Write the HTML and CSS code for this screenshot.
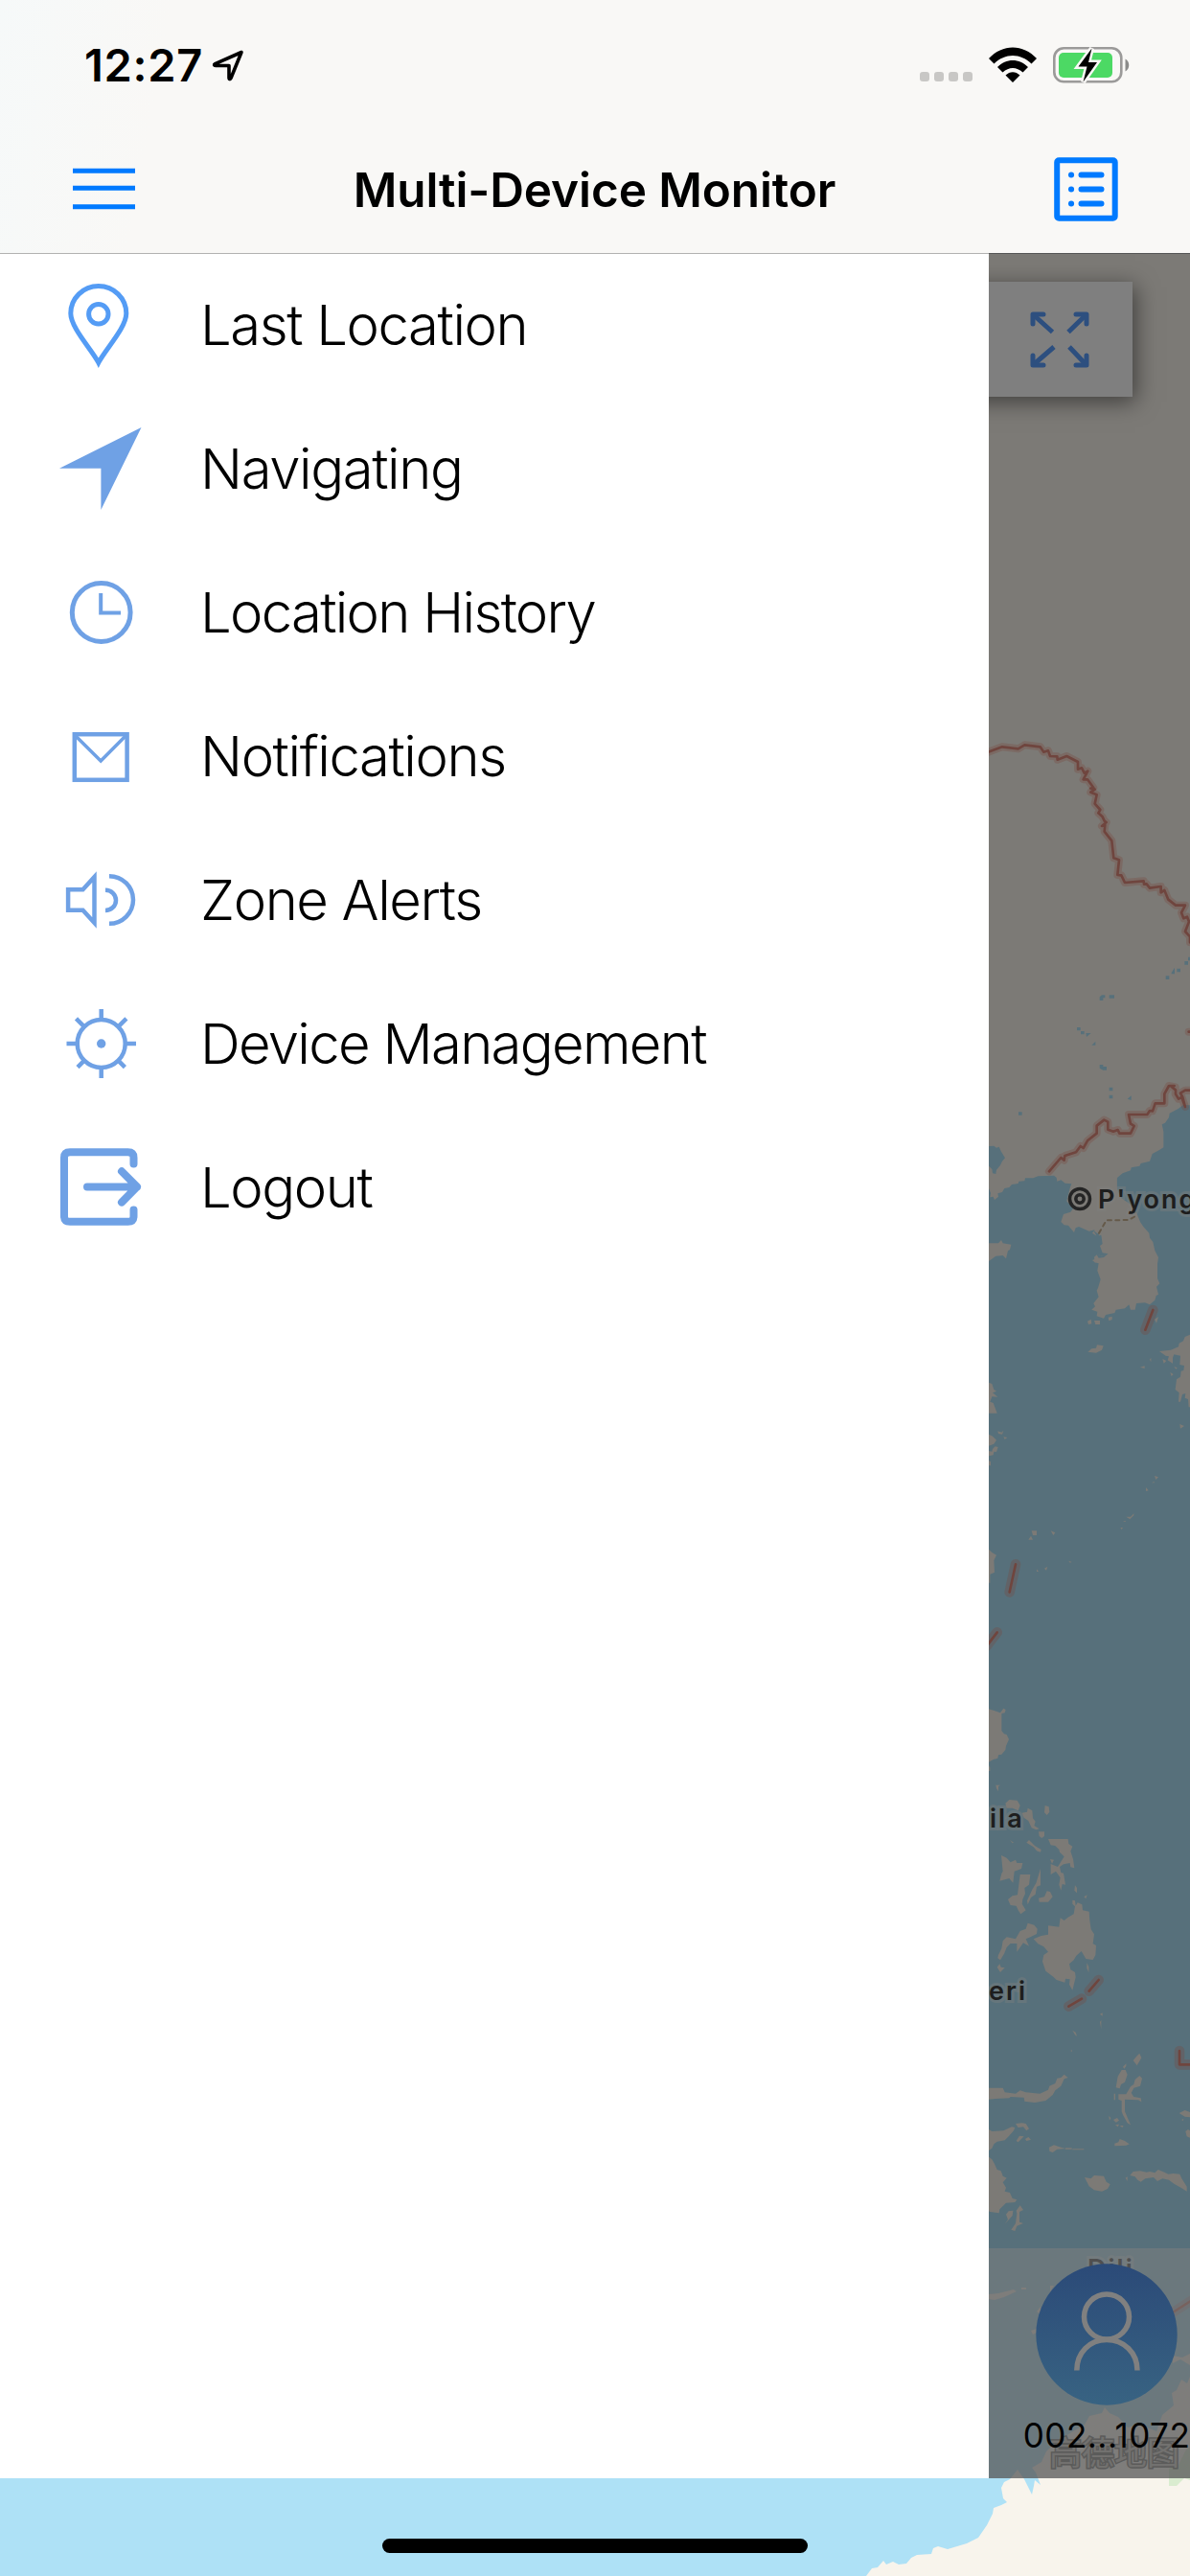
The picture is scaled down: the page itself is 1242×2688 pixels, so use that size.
FILE: index.html
```html
<!DOCTYPE html>
<html lang="en">
<head>
  <meta charset="utf-8">
  <title>Multi-Device Monitor</title>
  <link rel="stylesheet" href="styles.css">
</head>
<body>
  <div class="screen">
    <div class="map">
      <svg class="map-canvas" width="1242" height="2688" viewBox="0 0 1242 2688">
        <rect class="land" width="1242" height="2688"/>
        <rect class="water" y="2346" width="1242" height="342"/>

        <!-- north east: borders, rivers, coast -->
        <g transform="translate(1020 760) scale(.33333)">
          <path class="water" d="M36 1308L52 1307 60 1313 68 1310 75 1325 87 1345 78 1355 72 1368 60 1382 58 1395 48 1393 46 1380 36 1370Z"/>
          <path class="water" d="M36 1440L42 1455 40 1468 50 1466 54 1476 66 1466 64 1456 78 1452 85 1440 100 1437 108 1428 128 1425 130 1418 148 1417 150 1408 175 1408 190 1402 240 1400 248 1406 250 1418 262 1414 275 1424 297 1426 300 1450 437 1480V1408L455 1393 480 1384 482 1375 508 1370 512 1362 540 1355 548 1332 570 1320 583 1312V1262L578 1240 588 1235 600 1218 602 1205 630 1190 645 1178 666 1180V4800H36Z"/>
          <g class="water">
            <path d="M590 775h11v11h-11zM608 765l10-16v20h-10zM625 752h11v11h-11zM649 729h11v11h-11zM660 716h6v11h-6zM383 841l7-6h10v9h-6v8h-11zM413 835h16v10h-16zM312 936h11v10h-11zM324 948h11v10h-11zM340 954h16l-14 12zM358 992l12-12v12zM383 1053h11v6h11v11h-11l-11-6zM413 1124h11v11h-11zM413 1148h11v11h-11zM470 1160l12-10v14zM129 1201h11v10h-11z"/>
          </g>
          <path class="border-glow" d="M30 76L78 58 128 64 148 52 197 58 208 74 222 70 228 87 250 88 251 98 280 87 315 105V128L327 124 335 140 346 134 332 160 345 160 364 186 355 200 374 208 368 236 385 255 379 265 392 277 398 290 404 294 390 306 400 302 398 323 421 352 427 406 444 412 439 459 451 460 462 483 521 478 522 488 530 487 540 500 575 495V514L586 507 598 536 621 554H651L639 577 646 595 657 590 663 605 651 636 666 652V670"/>
          <path class="border-line" d="M30 76L78 58 128 64 148 52 197 58 208 74 222 70 228 87 250 88 251 98 280 87 315 105V128L327 124 335 140 346 134 332 160 345 160 364 186 355 188 368 191 355 200 374 208 368 236 385 255 379 265 392 277 398 290 404 294 390 306 400 302 398 323 421 352 427 406 444 412 439 459 451 460 462 483 521 478 522 488 530 487 540 500 575 495V514L586 507 598 536 621 554H651L639 577 646 595 657 590 663 605 651 636 666 652V670"/>
          <path class="border-glow" d="M225 1387L262 1344 272 1352 274 1338 309 1327 323 1308 332 1314 345 1291 374 1268V1244L397 1226 409 1232V1256L426 1262 440 1257 445 1268H480L491 1245 480 1238 474 1209H532L540 1197 549 1198 557 1174H586V1144L600 1119 620 1123V1145L630 1160 640 1155 651 1185 636 1142 651 1133H670"/>
          <path class="border-line" d="M225 1387L262 1344 272 1352 274 1338 309 1327 323 1308 332 1314 345 1291 374 1268V1244L397 1226 409 1232V1256L426 1262 440 1257 445 1268H480L491 1245 480 1238 474 1209H532L540 1197 549 1198 557 1174H586V1144L600 1119H617L608 1122 621 1132V1145L630 1160 640 1155 651 1185 643 1155 636 1142 651 1133H670"/>
          <path class="border-glow" d="M662 950h8"/>
          <path class="border-line" d="M662 950h8"/>
        </g>

        <!-- korea, japan, ryukyu -->
        <g transform="translate(1020 1220) scale(.33333)">
          <path class="land" d="M297 40L290 60 280 100 300 124 292 134 270 141 262 165 272 175 285 176 296 190 303 198 308 184 318 180 350 194 368 190 360 200 375 210 388 206 392 234 384 240 392 262 410 265 390 272 376 266 366 275 368 292 380 295 376 318 386 345 378 372 374 380 380 400 364 420 369 430 358 440 376 446 374 460 396 467 402 456 430 450 434 440 462 436 475 424 480 440 494 440 498 420 525 418 540 424 556 410 560 396 567 392 561 368 571 358 564 342V296L567 276 556 255 550 228 540 215 538 200 520 180 510 165 500 140 480 110 450 90 437 60V25Z"/>
          <path class="land" d="M346 572L358 562 372 560 375 550 395 553 390 566 372 575ZM345 476L356 470 358 484 348 486ZM366 474h18v12h-14zM410 464l12-3v10l-10 4zM360 285l10-4v12zM555 470l12-8-6 20z"/>
          <path class="land" d="M36 232H66L75 222 80 232 106 236 102 252 96 255 90 280 80 270 58 272 36 288ZM36 668L46 672 52 690 60 695 48 700 64 713 46 712 40 728 50 732 62 764H36ZM36 830L48 836 60 848 52 860 36 866ZM36 882L46 884 48 876 56 868 65 870 60 885 52 884 50 895 36 898ZM36 912l6 4v12h-6zM64 820l12 4 6-6-4 12-12-2zM82 838l12 2-8 6zM36 1190L46 1200 60 1208 52 1225 54 1262 40 1268V1295H36Z"/>
          <path class="land" d="M666 518L650 525 645 538 632 545 630 556 606 566 570 570 590 584 600 586 596 598 612 608V590L616 580 636 584 634 612 648 615 646 630 638 632 636 650 624 658 620 690 632 700 630 728 636 728 642 705 652 702 650 716 660 720 662 745H666ZM604 636l10 6-6 6zM580 594l12 6-8 8zM616 618l10 4-4 4z"/>
          <path class="land" d="M510 620l14-4v8zM540 596l4-6v14zM634 798l14 6-12 8zM555 960l12 4-8 8zM528 996l8 10-8 2zM546 982l8-4v4zM466 1088l14 0 10-10v6l-12 12zM456 1104l8-4v4zM448 1122l8 0-4 6zM170 1132h16v14h-12zM160 1160l8-12 6 12zM230 1132l14 6-6 8zM286 1226l10 4-6 2zM186 1252l6 8h-6zM210 1250l10-6-4 12z"/>
          <path class="water" d="M362 190l14 12 10-10-6 14 8 10-10-2-4 6-2-14zM372 264l18 8 20-8-14 12-16 2z"/>
          <path class="dmz" d="M381 200L404 160 474 159 493 148V132"/>
          <g class="border-glow">
            <path d="M526 503L550 441M101 1324L120 1237M30 1492L62 1450"/>
          </g>
          <g class="border-line">
            <path d="M526 503L550 441M101 1324L120 1237M30 1492L62 1450"/>
          </g>
        </g>

        <!-- philippines -->
        <g transform="translate(1020 1700) scale(.33333)">
          <path class="land" d="M36 250L55 256 72 262 82 248 89 252 86 262 76 264V318L84 328 92 330 99 345 90 365 88 378 76 392 66 394 64 404 50 408 36 416ZM36 426l4 8v10h-4z"/>
          <path class="land" d="M58 488h14l-6 4v16l-6-10zM88 545L100 534 125 536 134 552 128 568 110 560 92 560ZM140 575L156 572 158 560 172 568 174 592 182 602 178 615 194 625 184 628 170 622 160 600 146 590ZM192 634h18v14l-8 6-8-6zM212 552L224 556 226 572 218 582 210 574ZM154 668L162 660 180 678 200 690 198 698 186 694 176 682ZM102 660l12 8-4 2zM222 657H284L286 672 298 680 292 695 300 720 304 748 292 745 290 732 270 736 258 744 262 762 270 764 276 800 266 798 262 818 256 800 260 778 246 758 230 768V735L252 744 272 712 258 698 256 690 244 678 230 676ZM228 720l12 2-6 12z"/>
          <path class="land" d="M75 708L92 716 104 730 120 722 124 732 142 732 138 750 116 758 112 794 100 780 70 788 76 765 80 758ZM134 768L166 768 162 800 148 810 150 828 142 846 140 860 152 880 136 892 128 880 122 866 104 864 96 846 110 835 126 832ZM198 750V802L186 806 182 830 168 840 158 862 156 850 172 815 184 795ZM192 842L210 838 218 820 228 822 236 838 222 854 194 854ZM306 802l6 8v16l-8-8zM334 838l10-6-4 12z"/>
          <path class="land" d="M298 848L306 850 308 866 314 856 328 862 330 880 350 884 352 912 356 940 366 955 362 985 372 990 370 1020 362 1035 340 1032 326 1008 310 1022 302 1036 288 1048 292 1066 306 1074 308 1090 298 1130 288 1112 290 1096 276 1094 274 1106 248 1098 238 1088 214 1070 204 1040 208 1020 222 1010 208 994 190 985 176 970 200 960 222 956 222 928 256 932 260 904 272 912 284 902 302 892 306 868 298 860Z"/>
          <path class="land" d="M134 945L152 938 158 920 178 926 188 938 186 954 166 964 152 970 162 992 144 982 124 1010 124 984 104 984 92 996 84 1016 72 1036 64 1030 66 1020 76 1000 80 976 92 964 120 970ZM62 1058l8-10 4 10 12 2-14 14zM343 1045l6 12v18l-6-14z"/>
          <path class="border-glow wide" d="M286 1181L327 1157M350 1133L380 1098"/>
          <path class="border-line" d="M286 1181L327 1157M350 1133L380 1098"/>
        </g>

        <!-- indonesia -->
        <g transform="translate(1020 2060) scale(.33333)">
          <path class="land" d="M36 356H80L86 370 120 374 134 364 152 370 196 374 222 362 226 350 244 342 250 326 262 324 272 314 284 324 272 328 262 350 244 364 236 378 214 396 180 402 148 398 146 386 104 384 100 388 56 390 36 392ZM36 486L46 492 82 490 108 478 118 480 114 490 98 508 86 520 62 524 52 532 46 545 36 552ZM120 468L140 466 152 468 162 484 154 490 144 478 128 480ZM122 522L132 506 146 508 140 514 128 526ZM150 516l10-6 8 8-14 4z"/>
          <path class="land" d="M36 572L46 580 54 594 62 612 74 616 80 632 92 638 80 652 90 668 86 680 102 684 110 702 124 706 118 714 90 716 70 736 68 748 40 744 36 742ZM86 782L96 768 90 752 98 742 112 740 110 756ZM106 800L120 780 124 750 122 740 134 724 144 738 132 744 132 776 144 780 124 788 118 804Z"/>
          <path class="land" d="M225 542L240 535 262 542 276 546 250 548 236 558 226 554ZM276 544l20 0 0 4h-20zM298 547h36v3h-36zM336 636L356 640 366 630 396 632 404 650 416 658 408 672 390 680 366 676 350 664ZM430 530L442 526 446 516 462 522 476 532 466 536 430 538ZM478 630L488 618 510 616 530 620 540 618 556 622 566 612 586 620 598 626 614 624 634 626 640 640 656 665 656 680 640 670 616 656 600 644 580 640 564 648 552 636 526 640 512 650 502 644 494 634ZM464 638l6-4v14z"/>
          <path class="land" d="M440 320L452 300 464 300 470 314 462 338 450 345 446 358 434 355ZM456 290l10-10v8l-6 8zM488 270L500 256 508 248 514 262 500 286ZM442 376H466L480 352 490 345 494 330 508 318 516 326 510 350 490 356 482 372 490 384 512 388 514 400 504 394 462 392V430L480 472 470 466 456 440 452 430V396L442 392ZM426 456l12-6 6 8-10 6zM432 472l12-2-4 8zM412 444l6 6-4 8zM446 474l12 0-4 6zM428 374h4v20h-4zM632 435L650 426 666 432V448L650 446ZM652 492L660 486 666 490V512L656 508ZM384 125l8-4v10zM384 150l4-6v28zM298 176l10 6 4 12-6-4zM292 240l4-4v8zM640 456l6-4-2 8z"/>
          <path class="border-glow wide" d="M633 240V283H670"/>
          <path class="border-line" d="M633 240V283H670"/>
        </g>

        <!-- timor and the australian coast -->
        <path class="land" d="M1032 2394L1042 2393 1058 2389 1061 2391 1048 2397 1038 2400 1032 2399ZM1066 2387h5v2h-5zM1096 2385l4 0-4 6zM1082 2412l4-5v8zM1076 2432l6-2 0 4-4 2zM1224 2458L1234 2460 1242 2456V2468L1232 2462 1224 2466Z"/>
        <path class="land" d="M904 2688L910 2680 916 2679 922 2672 925 2676 932 2673 938 2676 946 2675 951 2669 957 2666 972 2665 974 2659 979 2657 989 2660 1009 2654 1021 2648 1030 2635 1036 2623 1037 2617 1045 2614 1051 2611 1047 2607 1045 2596 1048 2590 1054 2587 1062 2577 1069 2587 1077 2603 1079 2594 1080 2588 1086 2593 1081 2580 1077 2575 1087 2569 1092 2558 1102 2548 1120 2537 1132 2530 1137 2521 1150 2518 1153 2512 1158 2518 1167 2522 1177 2533 1190 2530 1207 2537 1213 2520 1225 2510 1223 2497 1228 2494 1233 2483 1239 2487 1242 2480V2688Z"/>
        <path class="park" d="M1220 2576L1230 2572 1238 2556 1242 2554V2588L1236 2586 1228 2594H1220Z"/>
        <path class="border-glow south" d="M1224 2413L1246 2399"/>
        <path class="border-line south" d="M1224 2413L1246 2399"/>

        <!-- place labels -->
        <g class="place">
          <circle class="capital" cx="1127" cy="1251" r="10.5"/>
          <circle class="capital" cx="1127" cy="1251" r="4.2"/>
          <text x="1146" y="1261">P'yongyang</text>
          <text x="1033" y="1907">ila</text>
          <text x="1032" y="2087">eri</text>
          <text x="1135" y="2377">Dili</text>
        </g>
      </svg>

      <div class="fullscreen-btn">
        <svg width="64" height="61" viewBox="0 0 64 61">
          <path d="M24.500 22.500L4 4M41 22.500L60 4M26 38L4 57M42 38L60 57"/>
          <path class="head" d="M4 14V4H15M49 4H60V14M4 47V57H15M49 57H60V47"/>
        </svg>
      </div>

      <div class="device-bar"></div>
      <div class="watermark">高德地图</div>
    </div>

    <header class="header">
      <div class="status-bar">
        <div class="status-left">
          <span class="time">12:27</span>
          <svg width="34" height="34" viewBox="0 0 34 34">
            <path class="locate" d="M31 3.500L3.500 15.700C2 16.500 2.500 17.500 4 17.500H18V30C18 32 19.300 32 20 30.500Z"/>
          </svg>
        </div>
        <div class="status-right">
          <div class="signal"><i></i><i></i><i></i><i></i></div>
          <svg class="wifi" width="50" height="37" viewBox="0 0 50 37">
            <path d="M0 12C14-3.500 36-3.500 50 12L44.500 17.500C33 6 17 6 5.500 17.500ZM9 21C18 11.500 32 11.500 41 21L35.500 26.500C29 20.500 21 20.500 14.500 26.500ZM17.500 29.500C22 25 28 25 32.500 29.500L25 37Z"/>
          </svg>
          <svg class="battery" width="80" height="38" viewBox="0 0 80 38">
            <rect class="shell" x="1.300" y="1.300" width="70" height="35" rx="10"/>
            <path class="cap" d="M75.500 12.500C80.500 15 80.500 23 75.500 25.500Z"/>
            <rect class="charge" x="6" y="6" width="56" height="26" rx="5"/>
            <path class="bolt" d="M40.500 1.500L26.500 20.500H35.500L31.500 36.500 46 16H37Z"/>
          </svg>
        </div>
      </div>
      <div class="nav-bar">
        <svg width="65" height="44" viewBox="0 0 65 44">
          <path class="nav-stroke" stroke-width="5" d="M0 3.300H65M0 21.300H65M0 40.700H65"/>
        </svg>
        <h1>Multi-Device Monitor</h1>
        <svg width="67" height="67" viewBox="0 0 67 67">
          <g class="nav-stroke" stroke-width="6">
            <rect x="3.200" y="3.200" width="60.500" height="60.500" rx="2"/>
            <path stroke-linecap="round" d="M28.500 18.500H49.500M28.500 33.500H49.500M28.500 48.500H49.500M18 18.500h.1M18 33.500h.1M18 48.500h.1"/>
          </g>
        </svg>
      </div>
    </header>

    <div class="content">
      <nav class="drawer">
        <a class="menu-item">
          <svg class="menu-icon pin" viewBox="0 0 90 100">
            <path d="M42.800 88.500C36 75 13.800 52 13.800 37A29 28.500 0 0 1 71.800 37C71.800 52 49.600 75 42.800 88.500Z"/>
            <circle cx="42.800" cy="37.800" r="10.200"/>
          </svg>
          <span>Last Location</span>
        </a>
        <a class="menu-item">
          <svg class="menu-icon solid" viewBox="0 0 90 100">
            <path d="M87.500 6L2 48.800H45.400V92Z"/>
          </svg>
          <span>Navigating</span>
        </a>
        <a class="menu-item">
          <svg class="menu-icon" viewBox="0 0 90 100">
            <circle cx="45.700" cy="49" r="30.400"/>
            <path stroke-width="4" d="M45.200 29V49.500H66"/>
          </svg>
          <span class="tight">Location History</span>
        </a>
        <a class="menu-item">
          <svg class="menu-icon" viewBox="0 0 90 100">
            <rect stroke-width="4.500" x="17.800" y="26.200" width="54.800" height="47.600"/>
            <path stroke-width="3.500" d="M18 27L45.200 54 72 27"/>
          </svg>
          <span>Notifications</span>
        </a>
        <a class="menu-item">
          <svg class="menu-icon" viewBox="0 0 90 100">
            <path stroke-width="4.500" d="M11.100 38.300H26.500L38.500 25V73L26.500 59.800H11.100Z"/>
            <path stroke-width="4.500" d="M50 38.800A11 10.600 0 0 1 50 60M54 24.200A25 24.800 0 0 1 54 73.800"/>
          </svg>
          <span>Zone Alerts</span>
        </a>
        <a class="menu-item">
          <svg class="menu-icon" viewBox="0 0 90 100">
            <circle stroke-width="4.500" cx="45.700" cy="49" r="25"/>
            <circle class="dot" cx="45.700" cy="49" r="4.700"/>
            <path stroke-width="4.500" d="M45.700 25V13M45.700 73V85M21.700 49H9.500M69.700 49H82M28 31.300L19.500 22.800M63.400 31.300L71.900 22.800M28 66.700L21 73.700M63.400 66.700L70.400 73.700"/>
          </svg>
          <span class="tight">Device Management</span>
        </a>
        <a class="menu-item">
          <svg class="menu-icon bold" viewBox="0 0 90 100">
            <path d="M79.500 24.500V18Q79.500 12.300 73.500 12.300H13Q7 12.300 7 18V79Q7 84.700 13 84.700H73.500Q79.500 84.700 79.500 79V72.500"/>
            <path d="M31 48.400H83M67 32.300L83 48.400 67 64.600"/>
          </svg>
          <span>Logout</span>
        </a>
      </nav>
      <div class="scrim">
        <div class="device">
          <svg width="148" height="148" viewBox="0 0 148 148">
            <defs>
              <linearGradient id="avatar" x1="0" y1="0" x2="0" y2="1">
                <stop offset="0" stop-color="#2b4a78"/>
                <stop offset="1" stop-color="#386382"/>
              </linearGradient>
            </defs>
            <circle cx="74" cy="74" r="73.700" fill="url(#avatar)"/>
            <circle class="person" cx="74" cy="55.500" r="23.500"/>
            <path class="person" d="M42.800 111.500C42.800 93 56 79.500 74 79.500S106 93 106 111.500"/>
          </svg>
          <span class="device-name">002...1072</span>
        </div>
      </div>
    </div>

    <div class="home-indicator"></div>
  </div>
</body>
</html>
```
FILE: styles.css
```css
* {
  box-sizing: border-box;
  margin: 0;
  padding: 0;
}

body {
  font-family: Inter, "Liberation Sans", "Noto Sans CJK SC", sans-serif;
  color: #000;
}

svg {
  display: block;
  flex-shrink: 0;
}

.screen {
  position: relative;
  display: flex;
  flex-direction: column;
  width: 1242px;
  height: 2688px;
  overflow: hidden;
}

/* map */
.map {
  position: absolute;
  inset: 0;
}

.land { fill: #f8f4ec; }
.water { fill: #aee1f6; }
.park { fill: #daecd0; }

.border-glow,
.border-line,
.dmz {
  fill: none;
  stroke-linejoin: round;
  stroke-linecap: round;
}

.border-glow {
  stroke: rgba(245, 140, 120, 0.3);
  stroke-width: 32px;
}

path.border-glow { stroke-width: 24px; }
path.border-glow.wide { stroke-width: 32px; }
path.border-glow.south { stroke-width: 10px; }

.border-line {
  stroke: #de8a7c;
  stroke-width: 8px;
}

path.border-line.south { stroke-width: 2.6px; }

.dmz {
  stroke: #cbb595;
  stroke-width: 6px;
  stroke-dasharray: 12 13;
}

.place text {
  font-size: 27px;
  font-weight: 600;
  letter-spacing: 2px;
  fill: #3c3c3c;
  stroke: rgba(255, 255, 255, 0.4);
  stroke-width: 6px;
  paint-order: stroke;
}

.capital {
  fill: none;
  stroke: #4a4a4a;
  stroke-width: 3.5px;
}

.fullscreen-btn {
  position: absolute;
  top: 294px;
  right: 60px;
  display: flex;
  align-items: center;
  justify-content: flex-end;
  width: 180px;
  height: 120px;
  padding-right: 44px;
  background: #fff;
  box-shadow: 3px 5px 22px rgba(0, 0, 0, 0.5);
}

.fullscreen-btn path {
  fill: none;
  stroke: #5a9eff;
  stroke-width: 5px;
}

.fullscreen-btn .head {
  stroke-linecap: round;
  stroke-linejoin: round;
}

.device-bar {
  position: absolute;
  top: 2346px;
  left: 0;
  width: 100%;
  height: 240px;
  background: rgba(255, 255, 255, 0.5);
}

.watermark {
  position: absolute;
  top: 2532px;
  right: 11px;
  font-family: "Noto Sans CJK SC", sans-serif;
  font-size: 34px;
  font-weight: 400;
  line-height: 52px;
  color: #e4e2df;
  -webkit-text-stroke: 3px #b6b6b4;
  paint-order: stroke;
}

/* header */
.header {
  position: relative;
  height: 264px;
  background: linear-gradient(100deg, #f6f9f9, #f9f8f6 14%);
}

.status-bar {
  display: flex;
  justify-content: space-between;
  height: 132px;
  padding: 0 63px 0 88px;
}

.status-left {
  display: flex;
  gap: 9px;
  padding-top: 39px;
}

.status-left svg { margin-top: 12px; }

.time {
  font-size: 47px;
  font-weight: 600;
  line-height: 58px;
  letter-spacing: 0.7px;
}

.locate {
  fill: none;
  stroke: #000;
  stroke-width: 3.6px;
  stroke-linejoin: round;
}

.status-right {
  display: flex;
  padding-top: 49px;
}

.signal {
  display: flex;
  gap: 5px;
  padding-top: 26px;
}

.signal i {
  width: 10px;
  height: 10px;
  border-radius: 3px;
  background: #c8c7c5;
}

.wifi { margin: 0 17px; }

.shell {
  fill: none;
  stroke: #9b9a99;
  stroke-width: 2.6px;
}

.cap { fill: #8b8b8a; }
.charge { fill: #4cd964; }

.bolt {
  stroke: #f9f8f6;
  stroke-width: 5px;
  paint-order: stroke;
}

.nav-bar {
  display: flex;
  align-items: center;
  justify-content: space-between;
  height: 130px;
  padding: 0 75px 0 76px;
}

.nav-bar h1 {
  padding-top: 2px;
  font-size: 49.5px;
  font-weight: 600;
  letter-spacing: -0.1px;
}

.nav-stroke {
  fill: none;
  stroke: #007aff;
}

/* drawer */
.content {
  position: relative;
  display: flex;
  height: 2322px;
}

.drawer {
  width: 1032px;
  background: #fff;
  border-top: 1px solid #b2b2b1;
}

.menu-item {
  display: flex;
  align-items: center;
  height: 150px;
  padding-left: 60px;
}

.menu-item span {
  margin-left: 59px;
  padding-bottom: 2px;
  font-size: 58px;
  font-weight: 300;
  letter-spacing: -1.4px;
}

.menu-item .tight { letter-spacing: -1.7px; }

.menu-icon {
  width: 90px;
  height: 100px;
  fill: none;
  stroke: #6fa1e5;
  stroke-width: 5px;
}

.menu-icon.pin { stroke: #549cf5; }

.menu-icon.solid,
.menu-icon .dot {
  fill: #6fa1e5;
  stroke: none;
}

.menu-icon.bold {
  stroke-width: 8px;
  stroke-linecap: round;
  stroke-linejoin: round;
}

.scrim {
  display: flex;
  flex: 1;
  align-items: flex-end;
  justify-content: center;
  overflow: hidden;
  background: rgba(0, 0, 0, 0.5);
  box-shadow: inset 0 1px 0 #555;
}

.device {
  display: flex;
  flex-direction: column;
  align-items: center;
  width: 210px;
  height: 224px;
  padding-left: 36px;
}

.person {
  fill: none;
  stroke: #808080;
  stroke-width: 5.5px;
}

.device-name {
  margin-top: 9px;
  font-size: 35px;
  line-height: 44px;
  letter-spacing: 0.5px;
  white-space: nowrap;
}

.home-indicator {
  position: absolute;
  bottom: 24px;
  left: 399px;
  width: 444px;
  height: 15px;
  border-radius: 8px;
  background: #000;
}
```
